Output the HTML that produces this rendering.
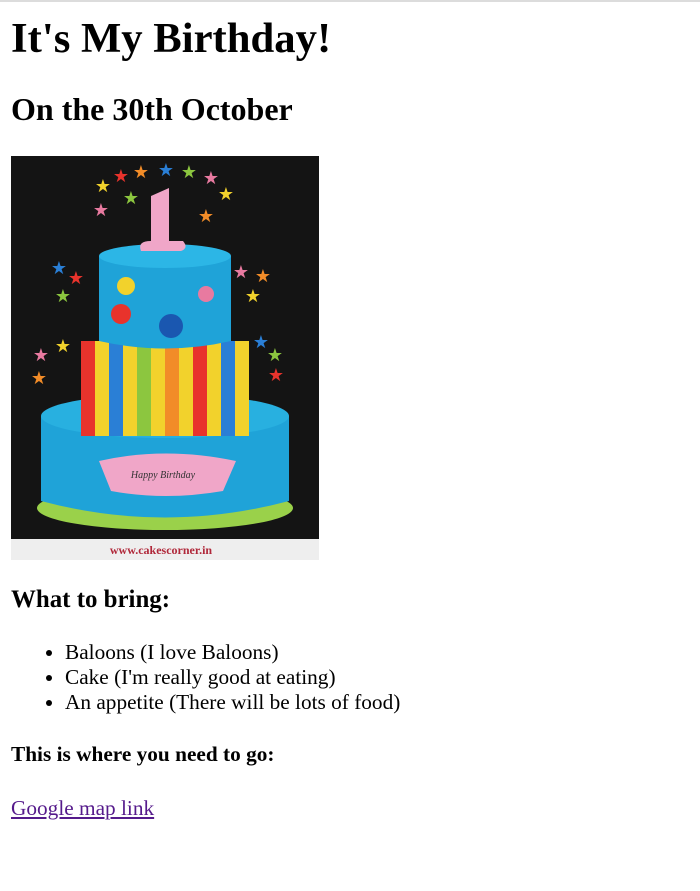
<!DOCTYPE html>
<html><head><meta charset="utf-8"><style>
html,body{margin:0;padding:0;background:#fff;width:700px;height:891px;overflow:hidden}
body{font-family:"Liberation Serif",serif;color:#000;position:relative}
.t{position:absolute;left:11px;margin:0;white-space:nowrap}
.bar{position:absolute;left:0;top:0;width:700px;height:3px;background:#fff;border-top:2px solid #dcdcdc;box-sizing:border-box}
ul{position:absolute;left:0;top:640px;margin:0;padding:0;list-style:none;font-size:21.3px;line-height:25px}
li{padding-left:65px;position:relative}
li:before{content:"";position:absolute;left:46px;top:10px;width:6px;height:6px;border-radius:50%;background:#000}
a{color:#551a8b;text-decoration:underline}
</style></head><body>
<div class="bar"></div>
<div class="t" style="top:18px;font-size:42.7px;line-height:42.7px;font-weight:bold">It's My Birthday!</div>
<div class="t" style="top:93px;font-size:32px;line-height:32px;font-weight:bold">On the 30th October</div>
<svg style="position:absolute;left:11px;top:156px" width="308" height="404" viewBox="0 0 308 404">
<rect width="308" height="404" fill="#141414"/>
<rect y="383" width="308" height="21" fill="#eee"/>
<text x="150" y="398" font-family="Liberation Serif,serif" font-size="12" font-weight="bold" fill="#b0283a" text-anchor="middle">www.cakescorner.in</text>
<ellipse cx="154" cy="352" rx="128" ry="22" fill="#9ad14a"/>
<path d="M30 260 Q154 230 278 260 L278 345 Q154 378 30 345Z" fill="#1fa3d8"/>
<ellipse cx="154" cy="260" rx="124" ry="22" fill="#28b0e0"/>
<g>
<rect x="70" y="185" width="168" height="95" fill="#f2d22c"/>
<rect x="70" y="185" width="14" height="95" fill="#e8332c"/><rect x="98" y="185" width="14" height="95" fill="#2a7fd6"/>
<rect x="126" y="185" width="14" height="95" fill="#8cc63f"/><rect x="154" y="185" width="14" height="95" fill="#f28c28"/>
<rect x="182" y="185" width="14" height="95" fill="#e8332c"/><rect x="210" y="185" width="14" height="95" fill="#2a7fd6"/>
</g>
<path d="M88 100 Q154 86 220 100 L220 185 Q154 200 88 185Z" fill="#1fa3d8"/>
<ellipse cx="154" cy="100" rx="66" ry="12" fill="#2cb6e6"/>
<circle cx="115" cy="130" r="9" fill="#f2d22c"/><circle cx="160" cy="170" r="12" fill="#1a57b0"/><circle cx="110" cy="158" r="10" fill="#e8332c"/><circle cx="195" cy="138" r="8" fill="#e87aa0"/>
<path d="M88 305 Q154 290 225 305 L212 335 Q154 345 100 335Z" fill="#f0a6c8"/>
<text x="152" y="322" font-size="10" font-style="italic" fill="#333" text-anchor="middle">Happy Birthday</text>
<path d="M140 40 L158 32 L158 85 L172 85 Q178 92 170 95 L130 95 Q126 85 140 85Z" fill="#f0a6c8"/>
<g font-size="18" font-family="DejaVu Sans,sans-serif" text-anchor="middle">
<text x="92" y="36" fill="#f2d22c">★</text><text x="110" y="26" fill="#e8332c">★</text><text x="130" y="22" fill="#f28c28">★</text><text x="155" y="20" fill="#2a7fd6">★</text><text x="178" y="22" fill="#8cc63f">★</text><text x="200" y="28" fill="#e87aa0">★</text><text x="215" y="44" fill="#f2d22c">★</text><text x="90" y="60" fill="#e87aa0">★</text><text x="195" y="66" fill="#f28c28">★</text><text x="120" y="48" fill="#8cc63f">★</text>
<text x="48" y="118" fill="#2a7fd6">★</text><text x="65" y="128" fill="#e8332c">★</text><text x="52" y="146" fill="#8cc63f">★</text><text x="230" y="122" fill="#e87aa0">★</text><text x="252" y="126" fill="#f28c28">★</text><text x="242" y="146" fill="#f2d22c">★</text>
<text x="30" y="205" fill="#e87aa0">★</text><text x="52" y="196" fill="#f2d22c">★</text><text x="28" y="228" fill="#f28c28">★</text><text x="250" y="192" fill="#2a7fd6">★</text><text x="264" y="205" fill="#8cc63f">★</text><text x="265" y="225" fill="#e8332c">★</text>
</g>
</svg>
<div class="t" style="top:588px;font-size:24.9px;line-height:24.9px;font-weight:bold">What to bring:</div>
<ul><li>Baloons (I love Baloons)</li><li>Cake (I'm really good at eating)</li><li>An appetite (There will be lots of food)</li></ul>
<div class="t" style="top:744px;font-size:21.3px;line-height:21.3px;font-weight:bold">This is where you need to go:</div>
<div class="t" style="top:798px;font-size:21.3px;line-height:21.3px"><a>Google map link</a></div>
</body></html>
